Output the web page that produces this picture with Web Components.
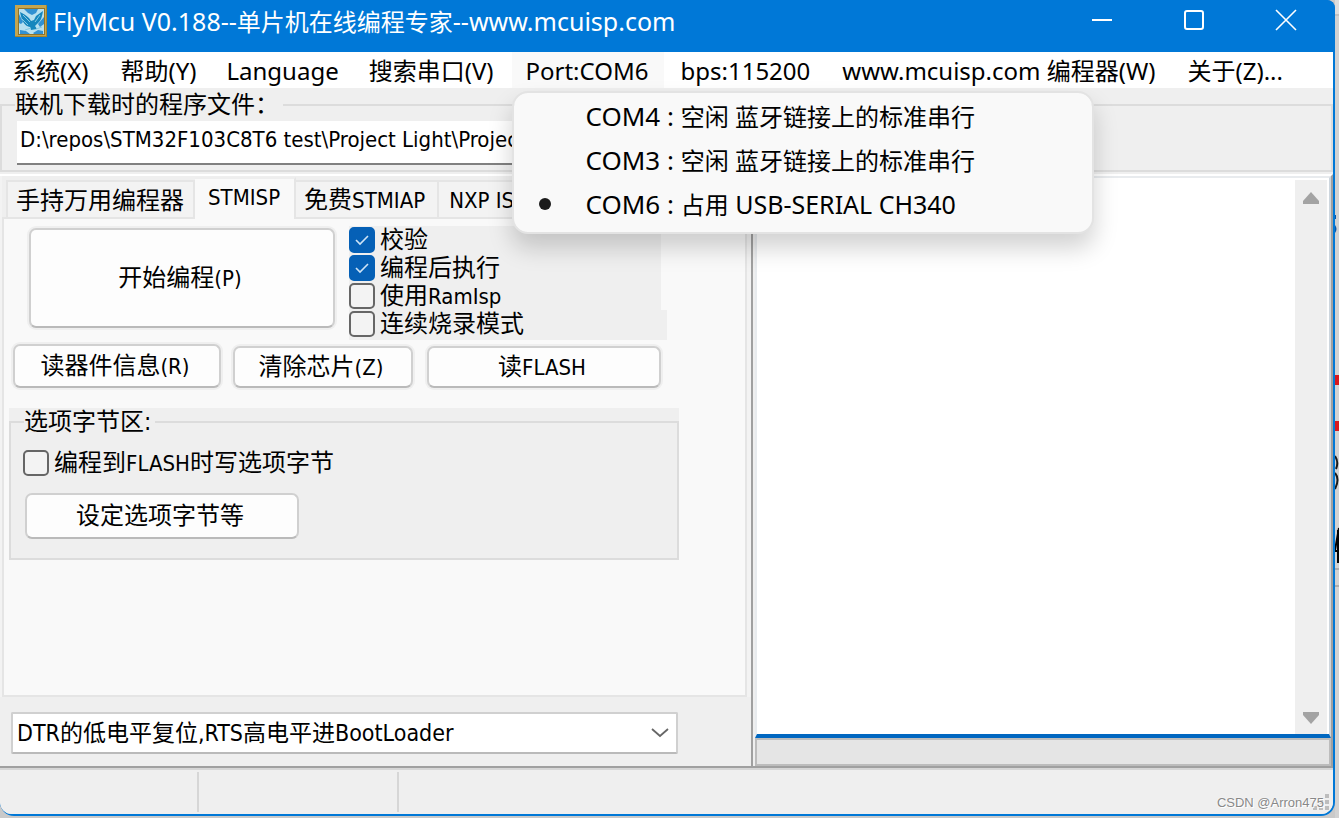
<!DOCTYPE html>
<html lang="zh-CN">
<head>
<meta charset="utf-8">
<title>FlyMcu V0.188</title>
<style>
  html, body { height: 100%; }
  body {
    margin: 0;
    background: #c9c9c9;
    color: #000;
    overflow: hidden;
    --ui: "Noto Sans", "Noto Sans CJK SC", sans-serif;
    --form: "DejaVu Sans Condensed", "Noto Sans CJK SC", sans-serif;
    --accent: #0078d7;
    --face: #efefef;
    --panel: #f9f9f9;
    --line: #dcdcdc;
    font: 24px/28px var(--ui);
  }
</style>
</head>
<body>
<fly-desktop></fly-desktop>
<script>
function define(name, html, setup) {
  const tpl = document.createElement('template');
  tpl.innerHTML = html;
  customElements.define(name, class extends HTMLElement {
    constructor() {
      super();
      this.attachShadow({ mode: 'open' }).appendChild(tpl.content.cloneNode(true));
    }
    connectedCallback() {
      if (setup) setup(this, this.shadowRoot);
    }
  });
}

define('title-bar', `
<style>
  :host { display: flex; align-items: flex-start; height: 52px; background: var(--accent); color: #fff; border-top-right-radius: 8px; flex: none; }
  .logo { width: 32px; height: 32px; margin: 5px 6px 0 15px; flex: none; }
  h1 { margin: 6px 0 0; font: 25px/30px var(--ui); flex: 1; white-space: nowrap; }
  ::slotted(span) { font-size: 24px; }
  button { width: 92px; height: 40px; padding: 0; border: 0; background: none; color: #fff; flex: none; }
  button svg { display: block; margin: auto; }
  nav { display: flex; margin-right: 3px; }
</style>
<svg class="logo" viewBox="0 0 32 32">
  <rect width="32" height="32" fill="#a88428"/>
  <rect x="0" y="0" width="31" height="31" fill="#c4a54f"/>
  <rect x="3" y="3" width="27" height="27" fill="#8f742c"/>
  <rect x="4" y="4" width="25" height="25" fill="#b7e0f0"/>
  <path d="M9 4h14l-2 4-4 2-4-2zM4 9l4 8-2 2-2-1zM29 12v7l-4 3-2-3zM5 25l6 1 4 3H5zM18 28l5-3 5 1v3h-9z" fill="#3191d2"/>
  <path d="M5 7c2 1 6 3 9 6l2 3 3-1 2-4 7-5c-1 6-2 10-6 13l-2 2 2 3-6 1-1-3c-5-1-8-5-10-15z" fill="#1586bd"/>
  <path d="M8 10l7 7M7 14l6 6M25 10l-5 7M10 25l6-2M21 24l6-2" stroke="#83c9e2" stroke-width="1" fill="none"/>
</svg>
<h1><slot></slot></h1>
<nav>
  <button aria-label="Minimize"><svg width="22" height="22"><path d="M1 11h20" stroke="#fff" stroke-width="2"/></svg></button>
  <button aria-label="Maximize"><svg width="22" height="22"><rect x="2" y="2" width="18" height="18" rx="2" fill="none" stroke="#fff" stroke-width="2"/></svg></button>
  <button aria-label="Close"><svg width="22" height="22"><path d="M1 1l20 20M21 1L1 21" stroke="#fff" stroke-width="1.6"/></svg></button>
</nav>`);

define('menu-item', `
<style>
  :host { display: block; position: relative; flex: none; margin: 0 2px; }
  :host([latin]) { margin: 0; }
  :host(:first-child) { margin-left: -2px; }
  button { height: 36px; padding: 2px 14px 0; border: 0; background: none; font: 24px/34px var(--ui); color: #000; white-space: nowrap; display: block; }
  :host([open]) { margin-right: 0; }
  :host([open]) button { background: var(--panel); padding-right: 16px; }
</style>
<button><slot></slot></button>
<slot name="popup"></slot>`);

define('menu-bar', `
<style>
  :host { display: flex; height: 36px; background: #fff; flex: none; }
</style>
<slot></slot>`);

define('popup-menu', `
<style>
  :host { position: absolute; z-index: 5; left: 0; top: 39px; width: 582px; box-sizing: border-box; padding: 1px 0 6px; border: 2px solid #e3e3e3; border-radius: 16px; background: var(--panel); background-clip: padding-box; box-shadow: 0 14px 24px rgba(0,0,0,.18); }
</style>
<slot></slot>`);

define('popup-item', `
<style>
  :host { display: block; }
  button { display: flex; align-items: center; width: 100%; height: 44px; padding: 0; border: 0; background: none; font: 26px/34px var(--ui); color: #000; text-align: left; white-space: pre; }
  ::slotted(span) { font-size: 24px; }
  ::slotted(.device) { font-size: 25px; }
  i { width: 12px; height: 12px; margin: 0 35px 0 25px; border-radius: 50%; }
  :host([checked]) i { background: #1b1b1b; }
</style>
<button role="menuitemradio"><i></i><div><slot></slot></div></button>`, (host, root) => {
  root.querySelector('button').setAttribute('aria-checked', host.hasAttribute('checked'));
});

define('group-box', `
<style>
  :host { display: block; background: var(--face); }
  fieldset { margin: 0; padding: 0; border: 2px solid var(--line); min-width: 0; }
  legend { margin-left: 13px; padding: 0 4px 0 0; font: 24px/32px var(--form); }
  :host([compact]) legend { line-height: 28px; }
</style>
<fieldset><legend></legend><slot></slot></fieldset>`, (host, root) => {
  root.querySelector('legend').textContent = host.getAttribute('label');
});

define('file-field', `
<style>
  :host { display: block; }
  input { display: block; box-sizing: border-box; width: 100%; height: 44px; padding: 0 3px 6px; border: 0; border-bottom: 2px solid #808080; background: #fff; font: 22px/28px var(--form); color: #000; outline: 0; }
</style>
<input type="text" aria-label="程序文件">`, (host, root) => {
  root.querySelector('input').value = host.getAttribute('value');
});

define('push-button', `
<style>
  :host { display: block; }
  button { box-sizing: border-box; width: 100%; height: 100%; padding: 0 4px 0 0; border: 2px solid #d0d0d0; border-bottom-color: #bababa; border-radius: 7px; background: #fdfdfd; box-shadow: 0 0 0 2px var(--face); font: 24px/28px var(--form); color: #000; white-space: nowrap; }
  ::slotted(span) { font-size: 22px; }
</style>
<button><slot></slot></button>`);

define('check-box', `
<style>
  :host { display: block; background: var(--face); }
  label { display: flex; align-items: center; height: 28px; font: 24px/28px var(--form); white-space: nowrap; }
  input { appearance: none; box-sizing: border-box; width: 26px; height: 26px; margin: 0 5px 0 0; border: 2px solid #666; border-radius: 5px; background: #f3f3f3; flex: none; }
  input:checked { border-color: #0560b6; background: #0560b6; }
  .tick { display: none; position: absolute; pointer-events: none; }
  input:checked + .tick { display: block; }
  ::slotted(span) { font-size: 22px; }
</style>
<label><input type="checkbox"><svg class="tick" width="26" height="26"><path d="M7 13l4 4 8-8" fill="none" stroke="#cfe4f6" stroke-width="1.6"/></svg><span><slot></slot></span></label>`,
(host, root) => {
  root.querySelector('input').checked = host.hasAttribute('checked');
});

define('combo-box', `
<style>
  :host { display: grid; align-items: center; }
  select { grid-area: 1 / 1; appearance: none; box-sizing: border-box; width: 100%; height: 42px; padding: 0 40px 0 4px; border: 2px solid #d0d0d0; border-bottom-color: #bababa; border-radius: 2px; background: #fff; font: 23px/32px var(--form); color: #000; }
  svg { grid-area: 1 / 1; justify-self: end; margin-right: 9px; pointer-events: none; }
</style>
<select aria-label="DTR / RTS"><option></option></select>
<svg width="18" height="12"><path d="M1 2l8 7 8-7" fill="none" stroke="#666" stroke-width="1.8"/></svg>`, (host, root) => {
  root.querySelector('option').textContent = host.getAttribute('value');
});

define('tab-button', `
<style>
  :host { display: block; flex: none; }
  button { box-sizing: border-box; height: 37px; padding: 2px 12px 0 8px; border: 2px solid #e5e5e5; border-left-width: 0; border-bottom: 0; background: #f3f3f3; font: 24px/32px var(--form); color: #000; white-space: nowrap; display: block; }
  :host(:first-child) button { border-left-width: 2px; padding-left: 8px; padding-right: 9px; }
  :host([selected]) button { height: 42px; margin-bottom: -2px; padding: 0 14px 4px 13px; border-color: #eee; border-right-color: #e5e5e5; background: var(--panel); position: relative; }
  :host([clip]) button { padding-left: 10px; padding-right: 60px; }
  ::slotted(span) { font-size: 22px; }
</style>
<button role="tab"><slot></slot></button>`);

define('tab-strip', `
<style>
  :host { display: flex; align-items: flex-end; height: 41px; padding-left: 4px; background: var(--face); flex: none; }
</style>
<slot></slot>`);

define('isp-panel', `
<style>
  :host { display: block; flex: 1; border: 2px solid #e5e5e5; background: var(--panel); padding: 7px 8px 0 5px; min-height: 0; margin-right: 4px; }
  .top { display: flex; gap: 14px; padding-left: 20px; }
  .start { width: 306px; height: 100px; margin-top: 2px; }
  .checks { width: 318px; }
  .checks check-box { width: 312px; }
  .checks check-box:last-child { width: 318px; height: 30px; }
  .row { display: flex; gap: 14px; margin: 4px 0 0 4px; align-items: flex-end; height: 46px; }
  .row push-button { height: 42px; margin-bottom: 2px; }
  .row .read { height: 44px; width: 208px; }
  .row .erase { width: 180px; margin-left: -2px; }
  .row .flash { width: 234px; }
  group-box { margin-top: 18px; max-width: 670px; }
  .options { height: 122px; padding: 13px 12px 0; box-sizing: border-box; }
  .options push-button { width: 274px; height: 46px; margin: 16px 0 0 2px; }
</style>
<div class="top">
  <push-button class="start">开始编程<span>(P)</span></push-button>
  <div class="checks">
    <check-box checked>校验</check-box>
    <check-box checked>编程后执行</check-box>
    <check-box>使用<span>RamIsp</span></check-box>
    <check-box>连续烧录模式</check-box>
  </div>
</div>
<div class="row">
  <push-button class="read">读器件信息<span>(R)</span></push-button>
  <push-button class="erase">清除芯片<span>(Z)</span></push-button>
  <push-button class="flash">读<span>FLASH</span></push-button>
</div>
<group-box compact label="选项字节区:">
  <div class="options">
    <check-box>编程到<span>FLASH</span>时写选项字节</check-box>
    <push-button>设定选项字节等</push-button>
  </div>
</group-box>`);

define('isp-pane', `
<style>
  :host { display: flex; flex-direction: column; flex: 751 1 0; min-width: 0; padding-left: 2px; background: #f3f3f3; }
  footer { height: 69px; padding: 15px 73px 0 11px; margin-left: -2px; box-sizing: border-box; background: var(--face); flex: none; }
</style>
<tab-strip role="tablist">
  <tab-button>手持万用编程器</tab-button>
  <tab-button selected><span>STMISP</span></tab-button>
  <tab-button>免费<span>STMIAP</span></tab-button>
  <tab-button clip><span>NXP IS</span></tab-button>
</tab-strip>
<isp-panel></isp-panel>
<footer><combo-box value="DTR的低电平复位,RTS高电平进BootLoader"></combo-box></footer>`);

define('log-pane', `
<style>
  :host { display: flex; flex-direction: column; flex: 579 1 0; min-width: 0; border-left: 2px solid #a0a0a0; }
  .view { display: flex; flex: 1; min-height: 0; margin-left: 2px; border: 2px solid #e8ebee; border-right: 2px solid #cdd6de; border-bottom: 4px solid #0067c0; background: #fff; }
  textarea { flex: 1; min-width: 0; border: 0; padding: 4px; resize: none; outline: 0; overflow: hidden; background: #fff; font: 22px/28px var(--form); }
  .bar { display: flex; flex-direction: column; justify-content: space-between; align-items: center; box-sizing: border-box; width: 32px; margin: 2px 2px 0 0; padding: 12px 0 10px; background: #efefef; }
  .bar svg { display: block; }
  progress { appearance: none; display: block; box-sizing: border-box; width: auto; height: 28px; margin-left: 2px; border: 2px solid #bcbcbc; background: #e5e5e5; }
  progress::-webkit-progress-bar { background: #e5e5e5; }
</style>
<div class="view">
  <textarea aria-label="Log" spellcheck="false"></textarea>
  <div class="bar">
    <svg width="16" height="12"><path d="M8 0L0 9v3h16V9z" fill="#a3a3a3"/></svg>
    <svg width="16" height="12"><path d="M8 12L0 3V0h16v3z" fill="#a3a3a3"/></svg>
  </div>
</div>
<progress value="0" max="100" aria-label="Progress"></progress>`);

define('status-bar', `
<style>
  :host { display: flex; height: 48px; box-sizing: border-box; border-top: 2px solid #a0a0a0; background: var(--face); box-shadow: inset 0 2px #d6d6d6; flex: none; padding: 4px 4px 2px 0; position: relative; }
  .cell { width: 197px; border-right: 2px solid #d6d6d6; }
  .cell + .cell { width: 198px; }
  .grip { position: absolute; right: 4px; bottom: 4px; }
  p { position: absolute; right: 9px; bottom: 3px; margin: 0; font: 13px/16px "Liberation Sans", sans-serif; color: #888; text-shadow: 0 0 2px #fff, 1px 1px 0 #fff; white-space: nowrap; }
</style>
<div class="cell"></div><div class="cell"></div>
<svg class="grip" width="16" height="16" fill="#bdbdbd"><path d="M12 0h4v4h-4zM12 6h4v4h-4zM12 12h4v4h-4zM6 6h4v4H6zM6 12h4v4H6zM0 12h4v4H0z"/></svg>
<p><slot></slot></p>`);

define('fly-window', `
<style>
  :host { display: flex; flex-direction: column; flex: 1; min-width: 0; margin-bottom: 2px; border-radius: 0 8px 14px 14px; overflow: hidden; background: var(--accent); padding-bottom: 2px; }
  .body { display: flex; flex-direction: column; flex: 1; min-height: 0; margin-right: 2px; border-radius: 0 0 12px 12px; overflow: hidden; background: var(--face); }
  group-box { flex: none; padding-top: 1px; }
  .file { height: 49px; box-sizing: border-box; padding-left: 15px; padding-right: 260px; }
  main { display: flex; flex: 1; min-height: 0; margin-top: 2px; border-top: 2px solid #fff; border-right: 2px solid #a0a0a0; }
</style>
<title-bar>FlyMcu V0.188--<span>单片机在线编程专家</span>--www.mcuisp.com</title-bar>
<div class="body">
  <menu-bar>
    <menu-item>系统(X)</menu-item>
    <menu-item>帮助(Y)</menu-item>
    <menu-item latin>Language</menu-item>
    <menu-item>搜索串口(V)</menu-item>
    <menu-item open>Port:COM6
      <popup-menu slot="popup" role="menu">
        <popup-item>COM4 : <span>空闲 蓝牙链接上的标准串行</span></popup-item>
        <popup-item>COM3 : <span>空闲 蓝牙链接上的标准串行</span></popup-item>
        <popup-item checked>COM6 : <span>占用</span><span class="device"> USB-SERIAL CH340</span></popup-item>
      </popup-menu>
    </menu-item>
    <menu-item>bps:115200</menu-item>
    <menu-item>www.mcuisp.com 编程器(W)</menu-item>
    <menu-item>关于(Z)...</menu-item>
  </menu-bar>
  <group-box label="联机下载时的程序文件：">
    <div class="file"><file-field value="D:\\repos\\STM32F103C8T6 test\\Project Light\\Projec"></file-field></div>
  </group-box>
  <main><isp-pane></isp-pane><log-pane></log-pane></main>
  <status-bar>CSDN @Arron475</status-bar>
</div>`);

define('fly-desktop', `
<style>
  :host { display: flex; height: 100vh; }
  svg { flex: none; display: block; }
</style>
<fly-window></fly-window>
<svg width="4" height="818">
  <rect width="4" height="818" fill="#d2d2d2"/>
  <rect width="4" height="14" fill="#dedede"/>
  <rect y="14" width="4" height="2" fill="#c2c2c2"/>
  <path d="M0 215h1v4H0zM0 225q3 4 0 8z" fill="#0a56a8"/>
  <path d="M0 375h4v10H0zM0 421h4v10H0z" fill="#d8191e"/>
  <path d="M0 456q4 6 1 13M0 473q5 6 0 16" fill="none" stroke="#1a1a1a" stroke-width="2"/>
  <path d="M4 528L0 550M0 551h4M3 530v33" fill="none" stroke="#000" stroke-width="2"/>
  <path d="M0 569h4M0 586h4" stroke="#888" stroke-width="1"/>
</svg>`);
</script>
</body>
</html>
